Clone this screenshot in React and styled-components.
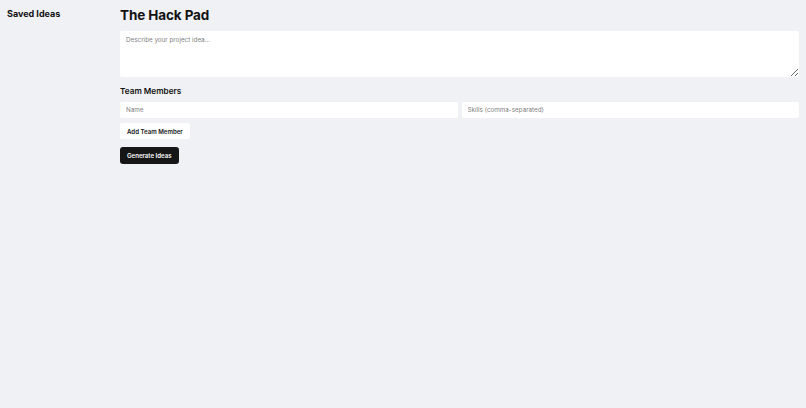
import { useState } from "react";
import styled, { createGlobalStyle } from "styled-components";

const GlobalStyle = createGlobalStyle`
  * {
    box-sizing: border-box;
  }
  html, body {
    margin: 0;
    padding: 0;
    height: 100%;
    background: #f0f1f5;
  }
  body {
    font-family: Inter, "Noto Sans", "Liberation Sans", sans-serif;
    color: #121212;
  }
  #root {
    height: 100%;
  }
`;

const Page = styled.div`
  display: flex;
  min-height: 100%;
  background: #f0f1f5;
`;

const Sidebar = styled.aside`
  width: 120px;
  flex-shrink: 0;
  padding: 8px 7px;
`;

const SidebarTitle = styled.h2`
  margin: 0;
  font-size: 9px;
  font-weight: 700;
  line-height: 12px;
`;

const Main = styled.main`
  flex: 1;
  padding: 6px 7px 0 0;
  display: flex;
  flex-direction: column;
`;

const Title = styled.h1`
  margin: 0 0 7px;
  font-size: 13.5px;
  font-weight: 700;
  line-height: 18px;
  letter-spacing: -0.1px;
`;

const IdeaBox = styled.textarea`
  width: 100%;
  height: 46px;
  border: none;
  border-radius: 2px;
  background: #fff;
  padding: 5px 6px;
  font-family: inherit;
  font-size: 6.3px;
  color: #121212;
  resize: vertical;
  outline: none;

  &::placeholder {
    color: #808080;
  }
`;

const SectionTitle = styled.h3`
  margin: 8px 0 5px;
  font-size: 8.2px;
  font-weight: 600;
  line-height: 12px;
`;

const MemberRow = styled.div`
  display: grid;
  grid-template-columns: 1fr 1fr;
  gap: 4px;
`;

const Field = styled.input`
  height: 16px;
  border: none;
  border-radius: 2px;
  background: #fff;
  padding: 0 6px;
  font-family: inherit;
  font-size: 6.3px;
  outline: none;

  &::placeholder {
    color: #808080;
  }
`;

const Actions = styled.div`
  display: flex;
  flex-direction: column;
  align-items: flex-start;
  gap: 8px;
  margin-top: 5px;
`;

const Button = styled.button`
  height: ${(p) => (p.$primary ? "17px" : "16px")};
  padding: 0 7px;
  border: none;
  border-radius: ${(p) => (p.$primary ? "3px" : "2px")};
  background: ${(p) => (p.$primary ? "#161616" : "#fff")};
  color: ${(p) => (p.$primary ? "#fff" : "#151515")};
  font-family: inherit;
  font-size: 6.1px;
  font-weight: 600;
  cursor: pointer;
`;

export default function App() {
  const [idea, setIdea] = useState("");
  const [name, setName] = useState("");
  const [skills, setSkills] = useState("");

  return (
    <>
      <GlobalStyle />
      <Page>
        <Sidebar>
          <SidebarTitle>Saved Ideas</SidebarTitle>
        </Sidebar>
        <Main>
          <Title>The Hack Pad</Title>
          <IdeaBox
            placeholder="Describe your project idea..."
            value={idea}
            onChange={(e) => setIdea(e.target.value)}
          />
          <SectionTitle>Team Members</SectionTitle>
          <MemberRow>
            <Field
              placeholder="Name"
              value={name}
              onChange={(e) => setName(e.target.value)}
            />
            <Field
              placeholder="Skills (comma-separated)"
              value={skills}
              onChange={(e) => setSkills(e.target.value)}
            />
          </MemberRow>
          <Actions>
            <Button>Add Team Member</Button>
            <Button $primary>Generate Ideas</Button>
          </Actions>
        </Main>
      </Page>
    </>
  );
}
